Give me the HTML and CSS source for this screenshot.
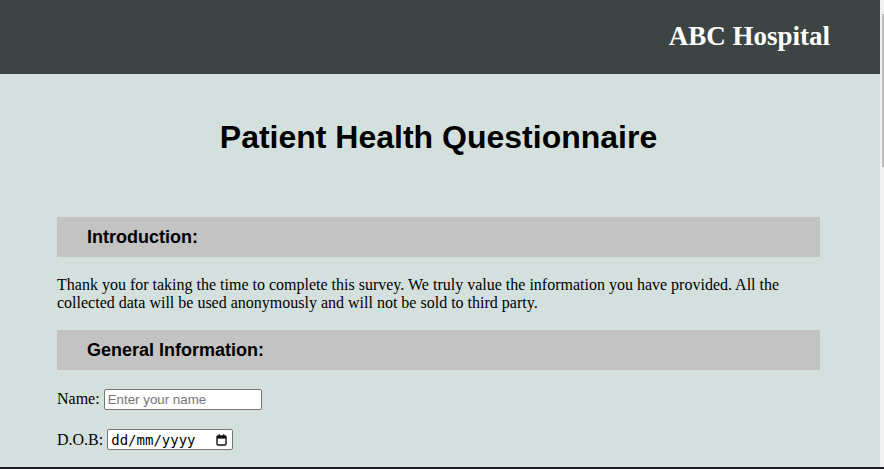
FILE: index.html
```html
<!DOCTYPE html>
<html lang="en-GB">
<head>
<meta charset="utf-8">
<title>Patient Health Questionnaire</title>
<link rel="stylesheet" href="styles.css">
</head>
<body>
  <div class="viewport">
    <div class="page">
      <header class="topbar">
        <span class="brand">ABC Hospital</span>
      </header>
      <main class="content">
        <h1 class="title">Patient Health Questionnaire</h1>
        <h3 class="bar">Introduction:</h3>
        <p class="intro">Thank you for taking the time to complete this survey. We truly value the information you have provided. All the collected data will be used anonymously and will not be sold to third party.</p>
        <h3 class="bar">General Information:</h3>
        <div class="field"><label for="name">Name:</label> <input id="name" class="text-input" type="text" placeholder="Enter your name"></div>
        <div class="field"><label for="dob">D.O.B:</label> <span class="date-input"><input id="dob" class="date-text" type="text" value="dd/mm/yyyy" readonly><svg class="cal" width="11" height="12" viewBox="0 0 11 12" aria-hidden="true"><rect x="1" y="2" width="9" height="9" rx="1" fill="none" stroke="#111" stroke-width="1.4"/><rect x="1" y="2" width="9" height="2.6" fill="#111"/><rect x="2.6" y="0.3" width="1.4" height="2.5" fill="#111"/><rect x="7" y="0.3" width="1.4" height="2.5" fill="#111"/></svg></span></div>
      </main>
    </div>
    <div class="scrollbar"><div class="thumb"></div></div>
  </div>
  <div class="edge"></div>
</body>
</html>
```
FILE: styles.css
```css
html, body {
  margin: 0;
  padding: 0;
}
body {
  width: 884px;
  height: 469px;
  overflow: hidden;
  font-family: "Liberation Serif", "Times New Roman", serif;
  font-size: 16px;
  color: #000;
  background: #d4e0de;
}
.viewport {
  display: flex;
  height: 467px;
  overflow: hidden;
}
.page {
  width: 880px;
  flex: none;
  background: #d4e0de;
}
.topbar {
  box-sizing: border-box;
  height: 74px;
  background: #3d4444;
  padding: 21px 50px 0 0;
  text-align: right;
}
.brand {
  color: #fff;
  font-family: "Liberation Serif", "Times New Roman", serif;
  font-weight: bold;
  font-size: 27px;
}
.content {
  padding: 0 60px 0 57px;
}
.title {
  margin: 45px 0 0;
  font-family: "Liberation Sans", Arial, sans-serif;
  font-size: 32px;
  line-height: 37px;
  font-weight: bold;
  text-align: center;
}
.bar {
  margin: 0;
  height: 40px;
  line-height: 40px;
  padding-left: 30px;
  background: #c3c3c3;
  font-family: "Liberation Sans", Arial, sans-serif;
  font-size: 18px;
  font-weight: bold;
}
.title + .bar {
  margin-top: 61px;
}
.intro {
  margin: 19px 0 18px;
}
.field {
  margin: 19px 0;
}
.text-input {
  box-sizing: border-box;
  width: 158px;
  height: 21px;
  padding: 1px 3px;
  border: 1px solid #767676;
  border-radius: 2px;
  background: #fff;
  font-family: "Liberation Sans", Arial, sans-serif;
  font-size: 13.33px;
  color: #000;
}
.text-input::placeholder {
  color: #757575;
}
.date-input {
  box-sizing: border-box;
  display: inline-flex;
  align-items: center;
  width: 126px;
  height: 21px;
  padding: 0 5px 0 3px;
  border: 1px solid #767676;
  border-radius: 2px;
  background: #fff;
}
.date-text {
  flex: 1;
  min-width: 0;
  border: 0;
  padding: 0;
  margin: 0;
  outline: none;
  background: transparent;
  font-family: "DejaVu Sans Mono", "Liberation Mono", monospace;
  font-size: 14px;
  color: #000;
}
.cal {
  flex: none;
  display: block;
}
.scrollbar {
  width: 4px;
  flex: none;
  background: #f1f1f1;
  padding: 14px 0 0 2px;
  box-sizing: border-box;
}
.thumb {
  width: 2px;
  height: 153px;
  background: #c1c1c1;
}
.edge {
  height: 2px;
  background: #1c1c2a;
}
```
